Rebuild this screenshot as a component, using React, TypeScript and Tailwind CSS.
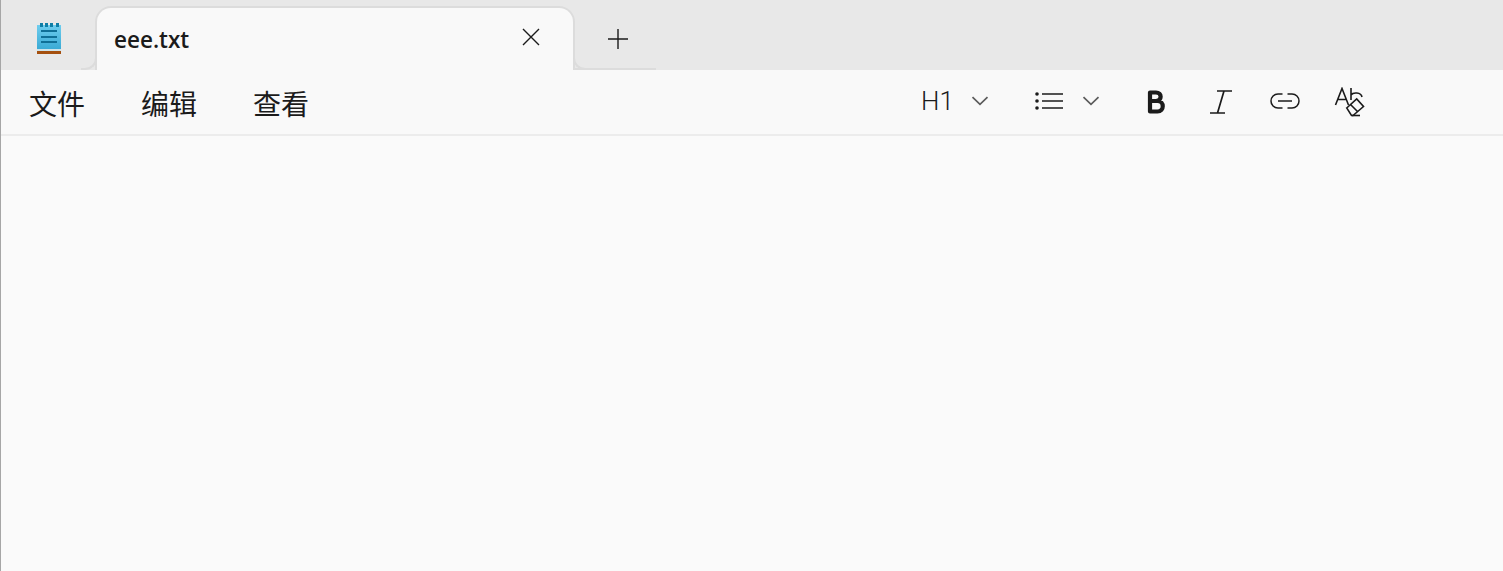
function NotepadIcon() {
  return (
    <svg width="26" height="34" viewBox="0 0 26 34">
      <defs>
        <linearGradient id="pad" x1="0" y1="0" x2="0" y2="1">
          <stop offset="0" stopColor="#6fcdee" />
          <stop offset="1" stopColor="#38a9d4" />
        </linearGradient>
      </defs>
      <rect x="1" y="3" width="24" height="25" fill="url(#pad)" />
      <rect x="1" y="27" width="24" height="2" fill="#cfe3ea" />
      <rect x="1" y="29" width="24" height="3" fill="#a5500f" />
      <rect x="4" y="1" width="3" height="4" fill="#0f7ea6" />
      <rect x="9" y="1" width="3" height="4" fill="#0f7ea6" />
      <rect x="14" y="1" width="3" height="4" fill="#0f7ea6" />
      <rect x="20" y="1" width="3" height="4" fill="#0f7ea6" />
      <rect x="5" y="8" width="16" height="2" fill="#0f6f96" />
      <rect x="5" y="14" width="16" height="2" fill="#0f6f96" />
      <rect x="5" y="19" width="16" height="2" fill="#0f6f96" />
    </svg>
  );
}

function Chevron() {
  return (
    <svg width="18" height="10" viewBox="0 0 18 10" fill="none" stroke="#5c5c5c" strokeWidth="1.7">
      <path d="M1.5 1.2 9 8.4l7.5-7.2" />
    </svg>
  );
}

function ListIcon() {
  return (
    <svg width="30" height="18" viewBox="0 0 30 18" fill="none" stroke="#1b1b1b" strokeWidth="1.7">
      <circle cx="3" cy="2" r="1.8" fill="#1b1b1b" stroke="none" />
      <circle cx="3" cy="9" r="1.8" fill="#1b1b1b" stroke="none" />
      <circle cx="3" cy="16" r="1.8" fill="#1b1b1b" stroke="none" />
      <path d="M8 2h21M8 9h21M8 16h21" />
    </svg>
  );
}

function BoldIcon() {
  return (
    <svg width="18" height="24" viewBox="0 0 18 24" fill="none" stroke="#1b1b1b" strokeWidth="4.2" strokeLinejoin="round">
      <path d="M3 2.5h6c6.2 0 6.2 8.5 0 8.5H3zM3 11h7.5c7 0 7 10.5 0 10.5H3z" />
    </svg>
  );
}

function ItalicIcon() {
  return (
    <svg width="24" height="24" viewBox="0 0 24 24" fill="none" stroke="#1b1b1b" strokeWidth="1.7">
      <path d="M8 1h15M1 23h15M15 1 8.5 23" />
    </svg>
  );
}

function LinkIcon() {
  return (
    <svg width="30" height="16" viewBox="0 0 30 16" fill="none" stroke="#1b1b1b" strokeWidth="1.5">
      <path d="M12.5 1H8a7 7 0 0 0 0 14h4.5M17.5 1H22a7 7 0 0 1 0 14h-4.5M8 8h14" />
    </svg>
  );
}

function ClearFormatIcon() {
  return (
    <svg width="32" height="30" viewBox="0 0 32 30" fill="none" stroke="#1b1b1b" strokeWidth="1.6">
      <path d="M1.5 18 8 1.5 14.5 18M3.6 12.5h8.8" />
      <path d="M17 1v12M17 8c2-3 10-3 11 2" />
      <path d="M12.7 21 22.7 12l6.8 7.5-10.5 9-1.5 0z" fill="#fafafa" />
      <path d="M16.5 17.5l7 7" />
      <path d="M18 28.5h8" />
    </svg>
  );
}

export default function App() {
  return (
    <div className="w-[1503px] h-[571px] flex flex-col overflow-hidden border-l border-[#a6a6a6] bg-[#fafafa]">
      {/* Tabs */}
      <div className="h-[70px] flex bg-[#e8e8e8] shrink-0">
        <div className="w-[94px] flex items-center justify-center pt-[7px] pl-[1px]">
          <NotepadIcon />
        </div>
        <div className="relative w-[480px] mt-[6px] pl-[17px] pr-[33px] flex items-center justify-between bg-[#f9f9f9] border-2 border-b-0 border-[#dcdcdc] rounded-t-[16px]">
          <span className="absolute left-[-16px] bottom-0 w-[16px] h-[14px] border-r-2 border-b-2 border-[#dcdcdc] rounded-br-[12px]" />
          <span className="absolute right-[-16px] bottom-0 w-[16px] h-[14px] border-l-2 border-b-2 border-[#dcdcdc] rounded-bl-[12px]" />
          <span className="pt-[2px] text-[22.5px] font-semibold text-[#1b1b1b] font-['Open_Sans','Noto_Sans',sans-serif]">eee.txt</span>
          <svg width="18" height="18" viewBox="0 0 18 18" fill="none" stroke="#1b1b1b" strokeWidth="1.4" className="mb-[4px]">
            <path d="m1 1 16 16M17 1 1 17" />
          </svg>
        </div>
        <div className="w-[81px] flex justify-center items-center border-b-2 border-[#dcdcdc] pt-[10px] pl-[4px]">
          <svg width="20" height="20" viewBox="0 0 20 20" fill="none" stroke="#1b1b1b" strokeWidth="1.4">
            <path d="M0 10h20M10 0v20" />
          </svg>
        </div>
      </div>
      {/* Menu and format bar */}
      <div className="h-[66px] flex items-center pl-[28px] pt-[2px] bg-[#f9f9f9] border-b-2 border-[#ececec] shrink-0 text-[#1b1b1b]">
        <div className="flex gap-[56px] text-[28px] leading-none font-['Noto_Sans_CJK_SC',sans-serif]">
          <span>文件</span>
          <span>编辑</span>
          <span>查看</span>
        </div>
        <div className="ml-[612px] pb-[5px] flex items-center">
          <span className="text-[26px] leading-none font-light font-['Roboto',sans-serif] w-[50px]">H1</span>
          <Chevron />
          <div className="ml-[45px] mr-[18px]">
            <ListIcon />
          </div>
          <Chevron />
          <div className="ml-[47px] mt-[2px]">
            <BoldIcon />
          </div>
          <div className="ml-[44px] mt-[2px]">
            <ItalicIcon />
          </div>
          <div className="ml-[37px]">
            <LinkIcon />
          </div>
          <div className="ml-[34px] mt-[3px]">
            <ClearFormatIcon />
          </div>
        </div>
      </div>
      {/* Editor */}
      <div className="flex-1 bg-[#fafafa]" />
    </div>
  );
}
